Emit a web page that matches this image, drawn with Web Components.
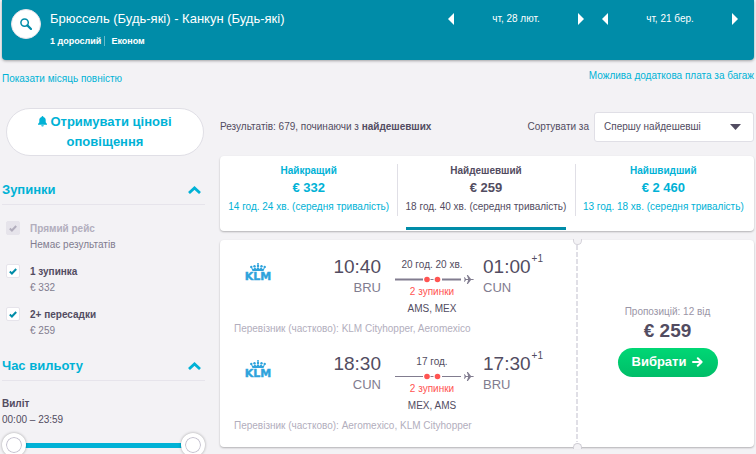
<!DOCTYPE html>
<html lang="uk">
<head>
<meta charset="utf-8">
<title>Брюссель – Канкун</title>
<style>
html { background: #f3f2f5; scrollbar-width: none; }
body { margin: 0; padding: 0 2px; font: 10px/16px "Liberation Sans", Arial, sans-serif; color: #524c61; }
</style>
</head>
<body>
<flights-page></flights-page>
<script>
const base = `<style>
*{box-sizing:border-box}
:host{display:block}
button,select,input{font:inherit;color:inherit;margin:0}
a{color:#00b2d6;text-decoration:none}
svg{display:block;flex:none}
</style>`;
function define(name, render) {
  customElements.define(name, class extends HTMLElement {
    connectedCallback() {
      if (this.shadowRoot) return;
      const t = document.createElement('template');
      t.innerHTML = base + render(k => this.getAttribute(k) || '', this);
      this.attachShadow({ mode: 'open' }).append(t.content.cloneNode(true));
    }
  });
}

define('date-stepper', a => `<style>
:host{display:flex;justify-content:space-between;align-items:center;width:136px}
button{border:0;background:none;padding:0;color:#fff}
</style>
<button aria-label="Попередній день"><svg width="6" height="12" viewBox="0 0 6 12"><path d="M6 0v12L0 6z" fill="#fff"/></svg></button>
<span><slot></slot></span>
<button aria-label="Наступний день"><svg width="6" height="12" viewBox="0 0 6 12"><path d="M0 0v12l6-6z" fill="#fff"/></svg></button>`);

define('search-header', () => `<style>
:host{display:flex;align-items:flex-start;gap:9px;height:60px;padding:9px 16px 0 9px;background:#008ca8;color:#fff;border-radius:0 0 4px 4px;box-shadow:0 1px 3px #0005}
.find{width:30px;height:30px;border-radius:50%;border:1px solid #e6e4eb;background:#fff;padding:0;display:grid;place-items:center}
h1{font-size:13px;line-height:20px;font-weight:400;margin:0}
.text{flex:1}
.meta{display:flex;align-items:center;margin-top:4px;line-height:16px;font-size:9px;font-weight:700}
.meta span+span{border-left:1px solid #66bacb;margin-left:3px;padding-left:6px;line-height:10px}
.dates{display:flex;gap:18px;font-size:10px;line-height:20px}
</style>
<button class="find" aria-label="Пошук"><svg width="12" height="12" viewBox="0 0 12 12" fill="none" stroke="#008ca8"><circle cx="4.600" cy="4.600" r="3.700" stroke-width="1.500"/><path d="M7.400 7.400 11 11" stroke-width="2.200" stroke-linecap="round"/></svg></button>
<div class="text"><h1>Брюссель (Будь-які) - Канкун (Будь-які)</h1>
<div class="meta"><span>1 дорослий</span><span>Економ</span></div></div>
<div class="dates"><date-stepper>чт, 28 лют.</date-stepper><date-stepper>чт, 21 бер.</date-stepper></div>`);

define('filter-section', a => `<style>
button{display:flex;width:100%;align-items:center;justify-content:space-between;border:0;border-bottom:1px solid #e6e4eb;background:none;padding:0 4px 5px 0;height:25px;color:#00b2d6;font-size:13px;line-height:18px;font-weight:700;text-align:left}
h2{margin:0}
</style>
<h2><button aria-expanded="true">${a('heading')}<svg width="13" height="8" viewBox="0 0 13 8"><path d="M1 7 6.500 2 12 7" fill="none" stroke="#00b2d6" stroke-width="2.800"/></svg></button></h2>
<slot></slot>`);

define('stop-filter', a => { const off = a('state') === 'off'; return `<style>
label{display:grid;grid-template-columns:14px 1fr;column-gap:10px;padding-left:4px}
.box{display:grid;place-items:center;width:14px;height:14px}
.box>*{grid-area:1/1}
input{appearance:none;width:14px;height:14px;border-radius:2px;background:${off ? '#e6e4eb' : '#fff'};border:1px solid #e6e4eb}
svg{pointer-events:none}
input:not(:checked)+svg{display:none}
b{color:${off ? '#b2aebd' : '#524c61'}}
small{font-size:10px;color:#817c8f;display:block}
</style>
<label><span class="box"><input type="checkbox" checked ${off ? 'disabled' : ''}><svg width="8" height="7" viewBox="0 0 8 7"><path d="M.8 3.600 2.900 5.500 7.200 1" fill="none" stroke="${off ? '#b2aebd' : '#008ca8'}" stroke-width="2"/></svg></span>
<span><b>${a('name')}</b><small>${a('note')}</small></span></label>`; });

define('time-range', a => `<style>
b,span{display:block}
.track{display:grid;align-items:center;height:24px;margin-top:5px;background:linear-gradient(#00b2d6,#00b2d6) center/calc(100% - 40px) 5px no-repeat}
input{grid-area:1/1;appearance:none;width:100%;height:24px;background:none;pointer-events:none}
input::-webkit-slider-thumb{box-sizing:border-box;appearance:none;pointer-events:auto;width:24px;height:24px;border-radius:50%;border:4px solid #fff;background:#fff;box-shadow:inset 0 0 0 1px #c4c1cf,0 0 3px #0005}
</style>
<b>${a('name')}</b><span>00:00 – 23:59</span>
<div class="track"><input type="range" aria-label="${a('name')}: від" min="0" max="1439" value="0"><input type="range" aria-label="${a('name')}: до" min="0" max="1439" value="1439"></div>`);

define('filter-sidebar', () => `<style>
:host{width:203px;flex:none}
.month{display:block;margin-top:11px;font-size:10px}
.alert{display:block;width:calc(100% - 5px);margin:21px 0 0 4px;border:1px solid #e0dfe6;border-radius:24px;background:#fff;color:#00b2d6;font-size:13px;line-height:20px;font-weight:700;padding:3px 20px}
.alert svg{display:inline-block;margin-right:3px;vertical-align:-1px}
filter-section{margin-top:24px}
filter-section+filter-section{margin-top:17px}
.stops{display:grid;gap:11px;padding-top:16px}
time-range{margin-top:15px}
</style>
<a class="month" href="#">Показати місяць повністю</a>
<button class="alert"><svg width="9" height="11" viewBox="0 0 9 11"><path d="M4.500 0a.9.9 0 0 1 .9.9c1.600.4 2.300 1.600 2.300 3.100v2.300L9 8v.7H0V8l1.300-1.700V4c0-1.500.7-2.700 2.300-3.100A.9.9 0 0 1 4.500 0zM3.200 9.300h2.600a1.300 1.300 0 0 1-2.600 0z" fill="#00b2d6"/></svg>Отримувати цінові оповіщення</button>
<filter-section heading="Зупинки"><div class="stops">
<stop-filter state="off" name="Прямий рейс" note="Немає результатів"></stop-filter>
<stop-filter name="1 зупинка" note="€ 332"></stop-filter>
<stop-filter name="2+ пересадки" note="€ 259"></stop-filter></div></filter-section>
<filter-section heading="Час вильоту"><time-range name="Виліт"></time-range></filter-section>`);

define('sort-bar', () => `<style>
:host{display:flex;align-items:center;gap:5px;margin-top:28px}
p{margin:0;flex:1}
.pick{display:grid;align-items:center;width:160px}
.pick>*{grid-area:1/1}
select{appearance:none;width:100%;height:30px;padding:0 30px 0 9px;border:1px solid #e0dfe6;border-radius:3px;background:#fff}
svg{justify-self:end;margin-right:13px;pointer-events:none}
</style>
<p>Результатів: 679, починаючи з <b>найдешевших</b></p>
<label for="s">Сортувати за</label>
<span class="pick"><select id="s"><option>Спершу найдешевші</option></select><svg width="11" height="6" viewBox="0 0 11 6"><path d="M0 0h11L5.500 6z" fill="#524c61"/></svg></span>`);

define('fare-tab', a => { const on = a('state') === 'on'; return `<style>
:host{flex:1;display:flex}
:host(:not(:first-of-type)) button::before{content:"";position:absolute;left:0;top:8px;bottom:15px;border-left:1px solid #e0dfe6}
button{position:relative;display:flex;flex-direction:column;align-items:center;width:100%;border:0;background:none;padding:7px 0 0;color:${on ? '#524c61' : '#00b2d6'};line-height:16px}
strong{font-size:13px;line-height:18px}
span{white-space:nowrap;line-height:20px}
${on ? 'button::after{content:"";position:absolute;left:9px;right:9px;bottom:1px;height:3px;background:#008ca8}' : ''}
</style><button role="tab" aria-selected="${on}"><b>${a('name')}</b><strong>${a('price')}</strong><span>${a('time')} (середня тривалість)</span></button>`; });

define('fare-tabs', () => `<style>
:host{display:flex;height:75px;margin-top:14px;padding-right:2px;background:#fff;border-radius:4px;box-shadow:0 1px 2px #0004}
</style>
<fare-tab name="Найкращий" price="€ 332" time="14 год. 24 хв."></fare-tab>
<fare-tab state="on" name="Найдешевший" price="€ 259" time="18 год. 40 хв."></fare-tab>
<fare-tab name="Найшвидший" price="€ 2 460" time="13 год. 18 хв."></fare-tab>`);

define('klm-logo', () => `<style>
:host{width:30px}
</style>
<svg width="30" height="24" viewBox="0 0 30 24" role="img" aria-label="KLM"><g fill="#2ea3dc"><path d="M9.500 8 8 4.600l2.500 1.400 1.500-1.800 1.400 1.800L15 3.800l1.600 2.200L18 4.200l1.500 1.800L22 4.600 20.500 8z"/><circle cx="8.300" cy="3.900" r="1.200"/><circle cx="11.500" cy="3.200" r="1.200"/><circle cx="15" cy="2.900" r="1.200"/><circle cx="18.500" cy="3.200" r="1.200"/><circle cx="21.700" cy="3.900" r="1.200"/><path d="M14.500 0h1v3h-1zM14 .5h2v.8h-2z"/></g>
<text x="15" y="17" text-anchor="middle" font-size="11" font-weight="700" fill="#2ea3dc" stroke="#2ea3dc" stroke-width=".4" font-family="DejaVu Sans, sans-serif">KLM</text></svg>`);

define('flight-leg', a => `<style>
:host{display:grid;grid-template-columns:40px 107px 94px auto;height:97px;align-content:start}
klm-logo{margin:7px 0 0 9px}
.t{font-size:19px;line-height:22px;white-space:nowrap}
.c{font-size:13px;line-height:20px;color:#817c8f}
.dep{text-align:right}
.mid{margin-left:14px;text-align:center}
.arr{margin-left:8px}
sup{font-size:10px;line-height:0;vertical-align:11px;margin-left:1px}
.mid div{padding-right:6px}
.d{line-height:18px}
.mid svg{margin-top:-1px}
.s{color:#ff5452;line-height:14px}
.v{line-height:16px;margin-top:2px}
.by{grid-column:1/-1;color:#b2aebd;margin-top:4px}
</style>
<klm-logo></klm-logo>
<div class="dep"><div class="t">${a('depart')}</div><div class="c">${a('from')}</div></div>
<div class="mid"><div class="d">${a('duration')}</div>
<svg width="80" height="12" viewBox="0 0 80 12"><path d="M0 6.500h66" stroke="#817c8f" stroke-width="${a('line')}"/><path d="M28 6.500h19" stroke="#fff" stroke-width="6"/><path d="M35.500 6.500h3" stroke="#817c8f" stroke-width="1"/><circle cx="32" cy="6.500" r="2.800" fill="#ff5452"/><circle cx="42.500" cy="6.500" r="2.800" fill="#ff5452"/><path d="M69 4.300h.8l1.200 1.600h2.200L71.800 2h1.100l3.100 3.900h1.600q1.300.1 1.300.6t-1.300.6H76L72.900 11h-1.100l1.400-3.900H71l-1.200 1.600H69l.6-2.200z" fill="#817c8f"/></svg>
<div class="s">2 зупинки</div><div class="v">${a('via')}</div></div>
<div class="arr"><div class="t">${a('arrive')}<sup>+1</sup></div><div class="c">${a('to')}</div></div>
<div class="by">Перевізник (частково): ${a('by')}</div>`);

define('flight-ticket', () => `<style>
:host{display:flex;margin-top:9px;height:207px;background:#fff;border-radius:4px;box-shadow:0 1px 2px #0004}
.legs{flex:1;padding:16px 0 0 14px}
.buy{position:relative;width:177px;display:flex;flex-direction:column;align-items:center;justify-content:center;padding:0 0 7px 4px;color:#9a95a6;line-height:16px}
.buy::before{content:"";position:absolute;left:-1px;top:5px;bottom:5px;width:2px;background:repeating-linear-gradient(#e0dfe6 0 5px,#fff 5px 7px)}
.n{position:absolute;left:-4px;width:9px;height:6px;background:#f3f2f5}
.n.a{top:-1px;border-radius:0 0 5px 5px;border:1px solid #d5d3da;border-top:0}
.n.b{bottom:-2px;border-radius:5px 5px 0 0;border:1px solid #cfcdd4;border-bottom:0}
strong{font-size:19px;line-height:22px;color:#524c61}
button{display:flex;align-items:center;justify-content:center;gap:6px;width:100px;height:29px;margin-top:6px;padding:0;border:0;border-radius:15px;background:linear-gradient(#00d775,#00bd68);color:#fff;font-size:13px;font-weight:700}
</style>
<div class="legs"><flight-leg line="2" depart="10:40" from="BRU" duration="20 год. 20 хв." via="AMS, MEX" arrive="01:00" to="CUN" by="KLM Cityhopper, Aeromexico"></flight-leg>
<flight-leg line="1" depart="18:30" from="CUN" duration="17 год." via="MEX, AMS" arrive="17:30" to="BRU" by="Aeromexico, KLM Cityhopper"></flight-leg></div>
<div class="buy"><i class="n a"></i><i class="n b"></i><span>Пропозицій: 12 від</span><strong>€ 259</strong>
<button>Вибрати<svg width="11" height="10" viewBox="0 0 11 10"><path d="M1 5h8.500M5.800 1.200 9.600 5 5.800 8.800" fill="none" stroke="#fff" stroke-width="2" stroke-linecap="round" stroke-linejoin="round"/></svg></button></div>`);

define('flights-page', () => `<style>
.cols{display:flex;gap:15px}
main{flex:1;min-width:0}
.bag{display:block;text-align:right;margin-top:8px;font-size:10px}
</style>
<search-header></search-header>
<div class="cols"><filter-sidebar></filter-sidebar>
<main><a class="bag" href="#">Можлива додаткова плата за багаж</a><sort-bar></sort-bar><fare-tabs role="tablist"></fare-tabs><flight-ticket></flight-ticket></main></div>`);
</script>
</body>
</html>
